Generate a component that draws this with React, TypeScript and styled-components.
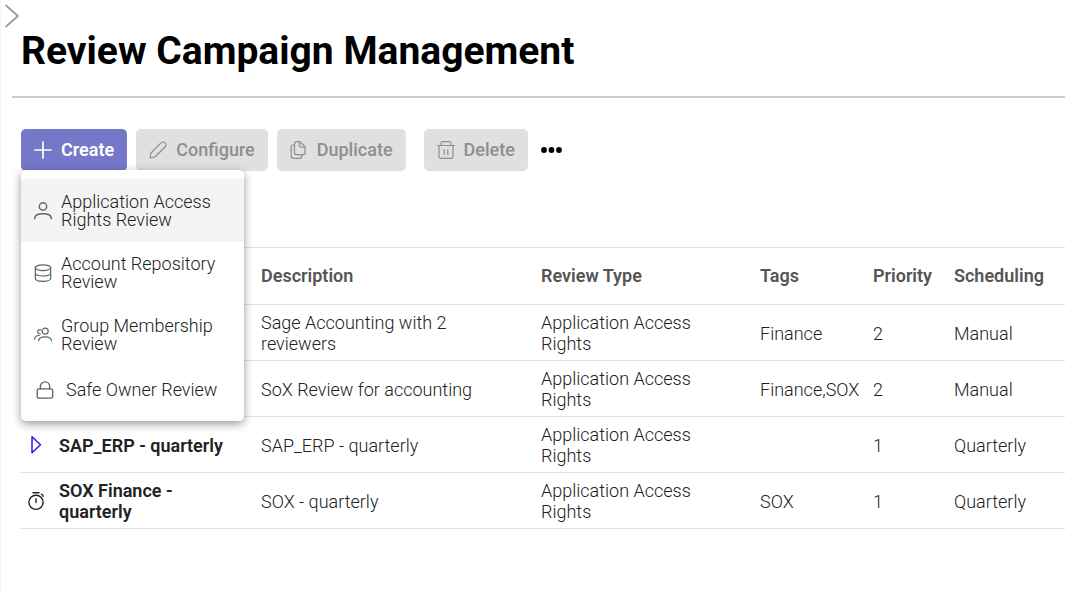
import React from "react";
import styled, { createGlobalStyle, css } from "styled-components";

const GlobalStyle = createGlobalStyle`
  *, *::before, *::after { box-sizing: border-box; }
  body {
    margin: 0;
    background: #fff;
    color: #212121;
    font-family: Roboto, "Liberation Sans", sans-serif;
    font-size: 18px;
    font-weight: 350;
    line-height: 21px;
  }
  button { font: inherit; color: inherit; border: 0; background: none; padding: 0; cursor: pointer; }
`;

const Page = styled.div`
  min-height: 100vh;
  border-left: 1px solid #f5f5f5;
  overflow: hidden;
`;

const ExpandButton = styled.button`
  display: block;
  width: 20px;
  height: 32px;
  color: #999;
`;

const Header = styled.header`
  margin-left: 11px;
  padding: 0 9px 23px;
  border-bottom: 2px solid #ccc;
`;

const Title = styled.h1`
  margin: -3px 0 0;
  color: #000;
  font-size: 39px;
  font-weight: 700;
  line-height: 44px;
`;

const Toolbar = styled.div`
  display: flex;
  align-items: center;
  gap: 9px;
  padding: 31px 20px 0;
`;

const ToolGroup = styled.div`
  display: flex;
  align-items: center;
  gap: 9px;
  margin-right: 9px;
`;

const MenuAnchor = styled.div`
  position: relative;
`;

const ToolButton = styled.button<{ $primary?: boolean }>`
  display: flex;
  align-items: center;
  gap: 9px;
  height: 42px;
  padding: 0 13px 1px;
  border-radius: 5px;
  font-weight: ${(p) => (p.$primary ? 600 : 500)};
  line-height: 20px;
  background: ${(p) => (p.$primary ? "#7577c9" : "#e0e0e0")};
  color: ${(p) => (p.$primary ? "#fff" : "#8e8e8e")};
`;

const MoreButton = styled.button`
  display: flex;
  align-items: center;
  height: 42px;
  padding: 0 4px;
  color: #000;
`;

const Menu = styled.ul`
  position: absolute;
  top: 41px;
  left: 0;
  z-index: 1;
  width: 223px;
  margin: 0;
  padding: 9px 0 8px;
  list-style: none;
  background: #fff;
  border-radius: 5px;
  box-shadow: 0 3px 10px rgba(0, 0, 0, 0.4);
`;

const MenuItem = styled.button<{ $active?: boolean; $single?: boolean }>`
  display: flex;
  align-items: center;
  gap: 9px;
  width: 100%;
  padding: 13px 20px 13px 13px;
  min-height: ${(p) => (p.$single ? 47 : 62)}px;
  line-height: 18px;
  text-align: left;
  color: #212121;
  background: ${(p) => (p.$active ? "#f4f4f4" : "transparent")};
  ${(p) =>
    p.$active &&
    css`
      min-height: 63px;
    `}
  ${(p) =>
    p.$single &&
    css`
      padding-left: 15px;
      gap: 12px;
    `}
  svg { flex: none; color: #616161; }
`;

const TableArea = styled.main`
  padding: 76px 0 0 20px;
`;

const Table = styled.table`
  width: 100%;
  table-layout: fixed;
  border-collapse: separate;
  border-spacing: 0;
  border-top: 1px solid #e0e0e0;
`;

const Col = styled.col<{ $width?: number }>`
  width: ${(p) => (p.$width ? `${p.$width}px` : "auto")};
`;

const HeadCell = styled.th`
  height: 57px;
  padding: 0 0 1px 7px;
  border-bottom: 1px solid #e0e0e0;
  color: #555;
  font-weight: 600;
  text-align: left;
`;

const Cell = styled.td<{ $strong?: boolean; $icon?: boolean }>`
  padding: 7px ${(p) => (p.$icon ? 0 : 14)}px 6px 7px;
  height: 56px;
  border-bottom: 1px solid #e0e0e0;
  font-weight: ${(p) => (p.$strong ? 600 : 350)};
  vertical-align: middle;
  svg { display: block; }
`;

type IconProps = { w?: number; h?: number; box?: string; sw?: number; children: React.ReactNode };

function Icon({ w = 18, h = 18, box, sw = 1, children }: IconProps) {
  return (
    <svg width={w} height={h} viewBox={box ?? `0 0 ${w} ${h}`} fill="none" stroke="currentColor"
      strokeWidth={sw} strokeLinecap="round" strokeLinejoin="round" aria-hidden="true">
      {children}
    </svg>
  );
}

const PlusIcon = () => <Icon sw={1.7}><path d="M9 1v16M1 9h16" /></Icon>;
const PencilIcon = () => (
  <Icon sw={1.2}><path d="M1 17l1-5L12.3 1.7a2.3 2.3 0 0 1 3.3 0l.7.7a2.3 2.3 0 0 1 0 3.3L6 16l-5 1z" /></Icon>
);
const CopyIcon = () => (
  <Icon sw={1.2}>
    <path d="M10 .7H6.500a2 2 0 0 0-2 2v9a2 2 0 0 0 2 2h6.500a2 2 0 0 0 2-2V5.700L10 .7z" />
    <path d="M9.500 .7v4a1.500 1.500 0 0 0 1.500 1.500h4M4.500 4H3.200a2 2 0 0 0-2 2v9a2.300 2.300 0 0 0 2.300 2.300H9.700a2 2 0 0 0 2-2v-1.600" />
  </Icon>
);
const TrashIcon = () => (
  <Icon sw={1.2}>
    <path d="M.6 4.500h16.800M4 4.500V2.500a1.800 1.800 0 0 1 1.800-1.800h6.400a1.800 1.800 0 0 1 1.800 1.800v2M2 4.500v11.300a1.500 1.500 0 0 0 1.500 1.500h11a1.500 1.500 0 0 0 1.500-1.500V4.500M7.200 8.500v4.800M10.800 8.500v4.800" />
  </Icon>
);
const UserIcon = () => (
  <Icon sw={1.4}><circle cx="9" cy="4.500" r="3.700" /><path d="M.7 16.800v-.6c0-2.700 3-4.500 8.300-4.500s8.300 1.800 8.300 4.500v.6" /></Icon>
);
const DatabaseIcon = () => (
  <Icon sw={1.2}>
    <ellipse cx="9" cy="3.700" rx="7.700" ry="2.900" />
    <path d="M1.300 3.700v10.500c0 1.800 3.400 3.100 7.700 3.100s7.700-1.300 7.700-3.100V3.700M1.300 9c0 1.700 3.400 3 7.700 3s7.700-1.300 7.700-3" />
  </Icon>
);
const GroupIcon = () => (
  <Icon sw={1.2}>
    <circle cx="11.200" cy="5.200" r="3" />
    <path d="M4.600 14.800c.2-2.500 2.500-4 6.400-4s6.300 1.500 6.500 4M7 3.900a2.200 2.200 0 1 0-.7 4M.6 13.300c0-2.400 1.500-3.700 4.600-3.800" />
  </Icon>
);
const LockIcon = () => (
  <Icon sw={1.3}><rect x="1.200" y="7.800" width="15.500" height="9.400" rx="1.800" /><path d="M4.300 7.800V5.500a4.700 4.700 0 0 1 9.400 0v2.300" /></Icon>
);
const PlayIcon = () => <Icon sw={1.5}><path d="M4 .8v16l8.500-8z" /></Icon>;
const TimerIcon = () => (
  <Icon w={18} h={20} sw={1.4}>
    <circle cx="8" cy="11.300" r="7.100" /><path d="M5 1.700h6M8 7.800v3.800M13.300 3.200q1.500.6 1.900 2" />
  </Icon>
);

const menuItems = [
  { label: "Application Access Rights Review", icon: <UserIcon />, active: true },
  { label: "Account Repository Review", icon: <DatabaseIcon /> },
  { label: "Group Membership Review", icon: <GroupIcon /> },
  { label: "Safe Owner Review", icon: <LockIcon />, single: true },
];

const tools = [
  { label: "Configure", icon: <PencilIcon /> },
  { label: "Duplicate", icon: <CopyIcon /> },
];

const campaigns = [
  { name: "", icon: null, description: "Sage Accounting with 2 reviewers", tags: "Finance", priority: 2, scheduling: "Manual" },
  { name: "", icon: null, description: "SoX Review for accounting", tags: "Finance,SOX", priority: 2, scheduling: "Manual" },
  { name: "SAP_ERP - quarterly", icon: <PlayIcon />, color: "#3a0ef0", description: "SAP_ERP - quarterly", tags: "", priority: 1, scheduling: "Quarterly" },
  { name: "SOX Finance - quarterly", icon: <TimerIcon />, description: "SOX - quarterly", tags: "SOX", priority: 1, scheduling: "Quarterly" },
];

const StatusIcon = styled.span<{ $color?: string }>`
  color: ${(p) => p.$color ?? "#212121"};
`;

export default function App() {
  return (
    <>
      <GlobalStyle />
      <Page>
        <ExpandButton aria-label="Expand navigation">
          <Icon w={20} h={32} sw={1.7}><path d="M5 5.500l12 10.500L5 26.500" /></Icon>
        </ExpandButton>
        <Header>
          <Title>Review Campaign Management</Title>
        </Header>
        <Toolbar>
          <ToolGroup>
            <MenuAnchor>
              <ToolButton $primary aria-haspopup="menu" aria-expanded="true"><PlusIcon />Create</ToolButton>
              <Menu>
                {menuItems.map((m) => (
                  <li key={m.label}>
                    <MenuItem $active={m.active} $single={m.single}>{m.icon}<span>{m.label}</span></MenuItem>
                  </li>
                ))}
              </Menu>
            </MenuAnchor>
            {tools.map((t) => (
              <ToolButton key={t.label} disabled>{t.icon}{t.label}</ToolButton>
            ))}
          </ToolGroup>
          <ToolButton disabled><TrashIcon />Delete</ToolButton>
          <MoreButton aria-label="More actions">
            <svg width="21" height="6" viewBox="0 0 21 6" fill="currentColor" aria-hidden="true">
              <circle cx="3" cy="3" r="2.900" /><circle cx="10.500" cy="3" r="2.900" /><circle cx="18" cy="3" r="2.900" />
            </svg>
          </MoreButton>
        </Toolbar>
        <TableArea>
          <Table>
            <colgroup>
              <Col $width={31} /><Col $width={202} /><Col $width={280} /><Col $width={219} />
              <Col $width={113} /><Col $width={81} /><Col />
            </colgroup>
            <thead>
              <tr>
                <HeadCell aria-label="Status" />
                <HeadCell aria-label="Name" />
                <HeadCell>Description</HeadCell>
                <HeadCell>Review Type</HeadCell>
                <HeadCell>Tags</HeadCell>
                <HeadCell>Priority</HeadCell>
                <HeadCell>Scheduling</HeadCell>
              </tr>
            </thead>
            <tbody>
              {campaigns.map((c) => (
                <tr key={c.description}>
                  <Cell $icon><StatusIcon $color={c.color}>{c.icon}</StatusIcon></Cell>
                  <Cell $strong>{c.name}</Cell>
                  <Cell>{c.description}</Cell>
                  <Cell>Application Access Rights</Cell>
                  <Cell>{c.tags}</Cell>
                  <Cell>{c.priority}</Cell>
                  <Cell>{c.scheduling}</Cell>
                </tr>
              ))}
            </tbody>
          </Table>
        </TableArea>
      </Page>
    </>
  );
}
